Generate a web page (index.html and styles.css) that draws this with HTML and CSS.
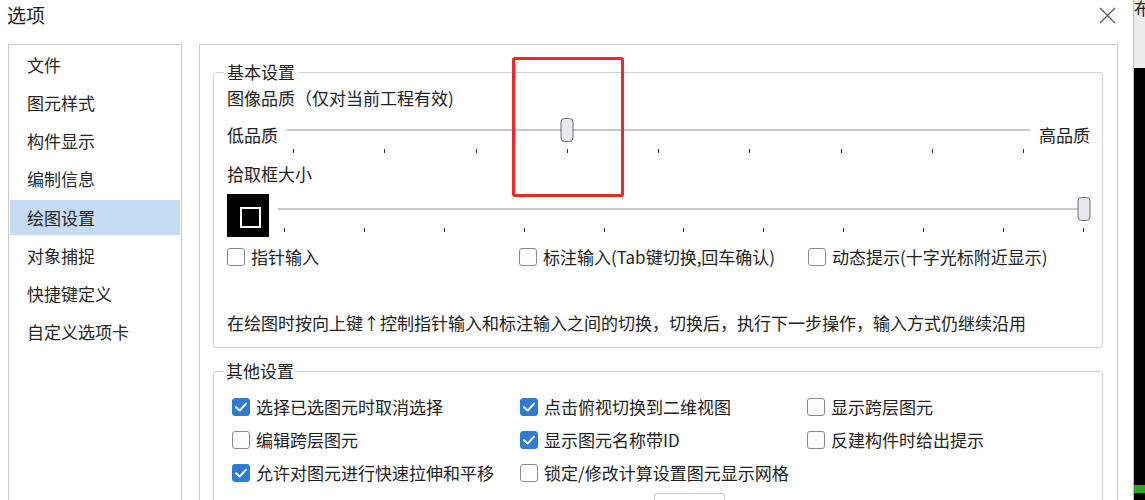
FILE: index.html
```html
<!DOCTYPE html>
<html lang="zh-CN">
<head>
<meta charset="utf-8">
<title>选项</title>
<link rel="stylesheet" href="styles.css">
</head>
<body>
<div class="screen">
  <div class="dialog">
    <header class="titlebar">
      <span class="title">选项</span>
      <span class="close" aria-label="关闭">
        <svg width="17" height="17" viewBox="0 0 17 17"><path d="M1 1 L16 16 M16 1 L1 16" stroke="#5a5a5a" stroke-width="1.3" fill="none"/></svg>
      </span>
    </header>
    <div class="body">
      <ul class="nav">
        <li>文件</li>
        <li>图元样式</li>
        <li>构件显示</li>
        <li>编制信息</li>
        <li class="active">绘图设置</li>
        <li>对象捕捉</li>
        <li>快捷键定义</li>
        <li>自定义选项卡</li>
      </ul>
      <div class="panel">
        <fieldset class="group basic">
          <legend>基本设置</legend>
          <div class="line">图像品质（仅对当前工程有效)</div>
          <div class="slider-row">
            <span class="end-label">低品质</span>
            <div class="slider">
              <div class="track-area"><div class="rail"><span class="thumb" style="left:37.5%"></span></div></div>
              <div class="ticks"><i></i><i></i><i></i><i></i><i></i><i></i><i></i><i></i><i></i></div>
            </div>
            <span class="end-label">高品质</span>
          </div>
          <div class="line pick-label">拾取框大小</div>
          <div class="slider-row pick">
            <span class="pick-box"><span class="pick-inner"></span></span>
            <div class="slider">
              <div class="track-area"><div class="rail"><span class="thumb" style="left:100%"></span></div></div>
              <div class="ticks"><i></i><i></i><i></i><i></i><i></i><i></i><i></i><i></i><i></i><i></i><i></i></div>
            </div>
          </div>
          <div class="cb-grid basic-grid">
            <label class="cb-item"><span class="cb"></span>指针输入</label>
            <label class="cb-item"><span class="cb"></span>标注输入(Tab键切换,回车确认)</label>
            <label class="cb-item"><span class="cb"></span>动态提示(十字光标附近显示)</label>
          </div>
          <div class="line note">在绘图时按向上键↑控制指针输入和标注输入之间的切换，切换后，执行下一步操作，输入方式仍继续沿用</div>
        </fieldset>
        <fieldset class="group other">
          <legend>其他设置</legend>
          <div class="cb-grid other-grid">
            <label class="cb-item"><span class="cb on"><svg viewBox="0 0 18 18"><path d="M4 9.2 L7.6 12.6 L14 5.6" stroke="#fff" stroke-width="2" fill="none" stroke-linecap="round" stroke-linejoin="round"/></svg></span>选择已选图元时取消选择</label>
            <label class="cb-item"><span class="cb on"><svg viewBox="0 0 18 18"><path d="M4 9.2 L7.6 12.6 L14 5.6" stroke="#fff" stroke-width="2" fill="none" stroke-linecap="round" stroke-linejoin="round"/></svg></span>点击俯视切换到二维视图</label>
            <label class="cb-item"><span class="cb"></span>显示跨层图元</label>
            <label class="cb-item"><span class="cb"></span>编辑跨层图元</label>
            <label class="cb-item"><span class="cb on"><svg viewBox="0 0 18 18"><path d="M4 9.2 L7.6 12.6 L14 5.6" stroke="#fff" stroke-width="2" fill="none" stroke-linecap="round" stroke-linejoin="round"/></svg></span>显示图元名称带ID</label>
            <label class="cb-item"><span class="cb"></span>反建构件时给出提示</label>
            <label class="cb-item"><span class="cb on"><svg viewBox="0 0 18 18"><path d="M4 9.2 L7.6 12.6 L14 5.6" stroke="#fff" stroke-width="2" fill="none" stroke-linecap="round" stroke-linejoin="round"/></svg></span>允许对图元进行快速拉伸和平移</label>
            <label class="cb-item"><span class="cb"></span>锁定/修改计算设置图元显示网格</label>
            <span></span>
            <span></span>
            <span class="cb-item"><span class="spin"></span></span>
            <span></span>
          </div>
        </fieldset>
      </div>
    </div>
    <div class="mark"></div>
  </div>
  <div class="backapp">
    <div class="back-top">布</div>
    <div class="back-canvas"><div class="green"></div></div>
  </div>
</div>
</body>
</html>
```

FILE: styles.css
```css
html, body {
  margin: 0;
  padding: 0;
  background: #fff;
}
body {
  font-family: "Noto Sans CJK SC", "Microsoft YaHei", sans-serif;
  font-size: 17px;
  color: #222;
}
.screen {
  display: flex;
  width: 1145px;
  height: 500px;
  overflow: hidden;
}
.dialog {
  position: relative;
  width: 1133px;
  height: 500px;
  flex: none;
  overflow: hidden;
  background: #fff;
}
.titlebar {
  display: flex;
  justify-content: space-between;
  align-items: flex-start;
  height: 44px;
}
.title {
  padding-left: 7px;
  font-size: 19px;
  line-height: 30px;
  color: #222;
}
.close {
  margin-top: 7px;
  margin-right: 17px;
  width: 17px;
  height: 17px;
  display: block;
}
.close svg { display: block; }

.body {
  display: flex;
  gap: 17px;
  padding-left: 8px;
}
.nav {
  list-style: none;
  margin: 0;
  width: 170px;
  height: 470px;
  flex: none;
  border: 1px solid #cbcbcb;
  padding: 2px 1px 0 1px;
  box-sizing: content-box;
  display: flex;
  flex-direction: column;
  gap: 3.15px;
}
.nav li {
  height: 35px;
  line-height: 35px;
  padding-left: 17px;
  color: #262626;
}
.nav li.active {
  background: #c5dcf2;
}

.panel {
  width: 890px;
  height: 470px;
  flex: none;
  border: 1px solid #cbcbcb;
  padding: 17px 14px 0 13px;
  box-sizing: content-box;
  overflow: hidden;
}
.group {
  margin: 0;
  min-width: 0;
  border: 1px solid #d2d2d2;
  border-radius: 3px;
}
.group legend {
  padding: 0 3px;
  margin-left: -3px;
  line-height: 20px;
  font-size: 17px;
  color: #222;
}
.group.basic {
  padding: 6px 12px 14px 13px;
}
.group.other {
  margin-top: 13px;
  padding: 9px 12px 0 12px;
}
.line {
  line-height: 20px;
  white-space: nowrap;
}
.slider-row {
  display: flex;
  align-items: flex-start;
  gap: 9px;
  margin-top: 10px;
}
.end-label {
  margin-top: 7px;
  line-height: 20px;
  white-space: nowrap;
}
.slider {
  flex: 1;
}
.track-area {
  position: relative;
  height: 24px;
}
.track-area::before {
  content: "";
  position: absolute;
  left: 0;
  right: 0;
  top: 11px;
  height: 2px;
  background: #c9c9c9;
}
.rail {
  position: relative;
  height: 100%;
  margin: 0 6px;
}
.thumb {
  position: absolute;
  top: 0;
  width: 13px;
  height: 24px;
  box-sizing: border-box;
  transform: translateX(-50%);
  border: 1px solid #6e6e6e;
  border-radius: 4px;
  background: #e7e9ee;
}
.ticks {
  display: flex;
  justify-content: space-between;
  margin-top: 7px;
  padding: 0 6px;
  height: 4px;
}
.ticks i {
  display: block;
  width: 1px;
  height: 4px;
  background: #333;
}
.pick-label {
  margin-top: 11px;
}
.slider-row.pick {
  margin-top: 10px;
}
.pick .slider {
  margin-top: 3px;
}
.pick-box {
  width: 42px;
  height: 43px;
  flex: none;
  background: #000;
  display: flex;
  align-items: center;
  justify-content: center;
}
.pick-inner {
  width: 21px;
  height: 21px;
  box-sizing: border-box;
  border: 2px solid #fff;
  margin: 4px 0 0 4px;
}

.cb-grid {
  display: grid;
  white-space: nowrap;
}
.basic-grid {
  margin-top: 10px;
  grid-template-columns: 292px 289px auto;
  grid-auto-rows: 20px;
}
.other-grid {
  margin-left: 6px;
  grid-template-columns: 288px 287px auto;
  grid-auto-rows: 33px;
}
.cb-item {
  display: flex;
  align-items: center;
  gap: 6px;
  line-height: 20px;
}
.cb {
  width: 18px;
  height: 18px;
  flex: none;
  box-sizing: border-box;
  border: 1px solid #8a8a8a;
  border-radius: 3px;
  background: #fff;
}
.cb.on {
  background: #2f7bd4;
  border-color: #2f7bd4;
}
.cb svg {
  display: block;
  margin: -1px;
  width: 18px;
  height: 18px;
}
.note {
  margin-top: 46px;
}
.spin {
  margin-left: 134px;
  width: 71px;
  height: 26px;
  box-sizing: border-box;
  border: 1px solid #c8c8c8;
  border-radius: 3px;
}

.mark {
  position: absolute;
  left: 512px;
  top: 57px;
  width: 112px;
  height: 140px;
  box-sizing: border-box;
  border: 3px solid #f0262b;
  border-radius: 3px;
}

.backapp {
  flex: 1;
  display: flex;
  flex-direction: column;
  border-left: 1px solid #bdbdbd;
  overflow: hidden;
}
.back-top {
  height: 68px;
  background: #ececec;
  font-size: 17px;
  line-height: 16px;
  color: #222;
  white-space: nowrap;
}
.back-canvas {
  flex: 1;
  background: #000;
  display: flex;
  flex-direction: column;
  justify-content: flex-end;
  padding-bottom: 7px;
}
.green {
  height: 8px;
  background: #2fa52f;
}
```
